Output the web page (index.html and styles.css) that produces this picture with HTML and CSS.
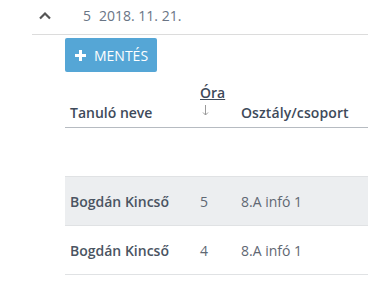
FILE: index.html
```html
<!DOCTYPE html>
<html>
<head>
<meta charset="utf-8">
<link rel="stylesheet" href="styles.css">
</head>
<body>
<div class="head">
  <span class="chev"><svg width="14" height="9" viewBox="0 0 14 9"><path d="M2 7.5 L7 2.5 L12 7.5" fill="none" stroke="#555" stroke-width="2.2"/></svg></span>
  <span class="title"><span class="num">5</span>2018. 11. 21.</span>
</div>
<div class="content">
  <button class="btn"><svg class="plus" width="11" height="11" viewBox="0 0 11 11"><path d="M4 0h3v4h4v3h-4v4h-3v-4h-4v-3h4z" fill="#fff"/></svg>MENTÉS</button>
  <table class="tbl">
    <thead>
      <tr>
        <th class="c1">Tanuló neve</th>
        <th class="c2"><span class="sort">Óra</span><svg class="arrow" width="7" height="11" viewBox="0 0 7 11"><path d="M3.5 0V10M1 7.5L3.5 10L6 7.5" fill="none" stroke="#9a9a9a" stroke-width="1"/></svg></th>
        <th class="c3">Osztály/csoport</th>
      </tr>
    </thead>
    <tbody>
      <tr class="empty"><td></td><td></td><td></td></tr>
      <tr class="odd"><td class="name">Bogdán Kincső</td><td>5</td><td>8.A infó 1</td></tr>
      <tr><td class="name">Bogdán Kincső</td><td>4</td><td>8.A infó 1</td></tr>
    </tbody>
  </table>
</div>
</body>
</html>
```
FILE: styles.css
```css
body {
  margin: 0;
  font-family: "Open Sans", sans-serif;
  background: #fff;
  color: #56606b;
}
.head {
  margin-left: 32px;
  height: 35px;
  border-bottom: 1px solid #dcdcdc;
  display: flex;
  align-items: center;
  box-sizing: border-box;
  padding-bottom: 4px;
}
.chev {
  display: flex;
  width: 14px;
  margin-left: 6px;
}
.title {
  margin-left: 31px;
  font-size: 14px;
  color: #6a7585;
}
.num { margin-right: 8px; }
.content {
  padding-left: 65px;
  padding-top: 3px;
}
.btn {
  display: flex;
  align-items: center;
  height: 34px;
  width: 92px;
  border: none;
  border-radius: 2px;
  background: #55a6d6;
  color: #fff;
  font-family: "Open Sans", sans-serif;
  font-size: 14px;
  padding: 0 0 0 10px;
}
.plus {
  margin-right: 8px;
}
.tbl {
  border-collapse: collapse;
  width: 303px;
  font-size: 14px;
}
.tbl th {
  text-align: left;
  vertical-align: bottom;
  font-weight: 600;
  color: #3e4a5a;
  padding: 0 5px 5px 5px;
  height: 50px;
  border-bottom: 1px solid #b6bbc1;
}
.c1 { width: 120px; }
.c2 { width: 31px; }
.c3 { letter-spacing: 0.1px; }
.sort {
  display: block;
  text-decoration: underline;
  line-height: 16px;
}
.arrow {
  display: block;
  margin: 4px 0 6px 2px;
}
.tbl td {
  padding: 0 5px;
  height: 48px;
  border-bottom: 1px solid #e0e2e4;
  color: #5f6873;
}
.tbl tr.odd td { background: #eceef0; }
.tbl td.name { font-weight: 600; color: #4a5462; }
```
